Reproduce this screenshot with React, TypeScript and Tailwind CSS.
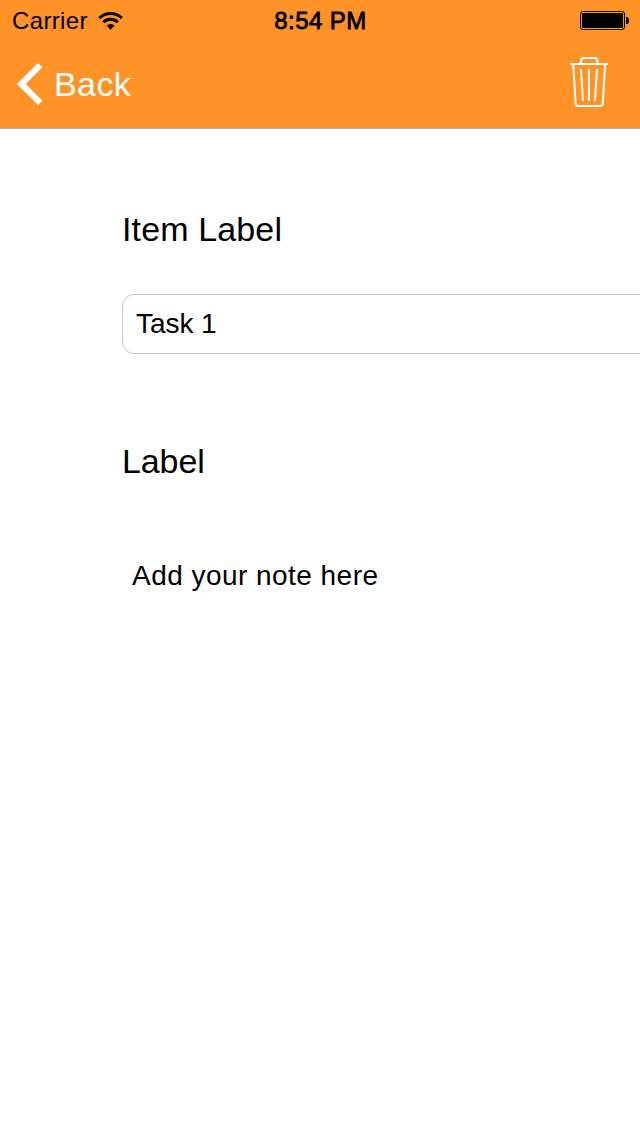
function WifiIcon() {
  return (
    <svg className="ml-[10px] h-[20px] w-[26px]" viewBox="98 10 26 20" fill="none">
      <path d="M99.4 17.2a15.8 15.8 0 0 1 22.4 0" stroke="#000" strokeWidth="3.1" />
      <path d="M103.3 21.2a10.3 10.3 0 0 1 14.6 0" stroke="#000" strokeWidth="3" />
      <path d="M106.6 24.6a5.6 5.6 0 0 1 8 0l-4 4.2z" fill="#000" />
    </svg>
  );
}

function BatteryIcon() {
  return (
    <svg className="h-[20px] w-[50px]" viewBox="580 11 50 20" fill="none">
      <rect x="580.5" y="11.5" width="44" height="18" rx="2.5" stroke="#000" />
      <rect x="582" y="13" width="41" height="15" rx="1.2" fill="#000" />
      <path d="M626 17h1.5q1.5 1 1.5 3.5t-1.5 3.5H626z" fill="#000" />
    </svg>
  );
}

function StatusBar() {
  return (
    <div className="grid h-10 grid-cols-3 items-start pl-3 pr-[10px] pt-px text-2xl leading-[40px] text-black">
      <div className="flex items-center">
        <span className="tracking-[0.35px]">Carrier</span>
        <WifiIcon />
      </div>
      <div className="-ml-px text-center tracking-[0.45px] [-webkit-text-stroke:0.8px_#000]">8:54 PM</div>
      <div className="flex h-10 items-center justify-end">
        <BatteryIcon />
      </div>
    </div>
  );
}

function NavBar() {
  return (
    <nav className="flex h-[88px] justify-between pl-4 pr-8 text-white">
      <button className="flex h-[88px] items-center">
        <svg className="h-[44px] w-[28px]" viewBox="16 62 28 44">
          <path d="M38 63l4.3 4.2L25.8 84l16.5 16.7L38 105 16.8 84z" fill="#fff" />
        </svg>
        <span className="ml-[10px] text-[34px] leading-[40px] tracking-[0.4px]">Back</span>
      </button>
      <button className="flex items-start pt-4">
        <svg className="h-[52px] w-[38px]" viewBox="570 56 38 52" fill="none" stroke="#fff" strokeWidth="2">
          <path d="M570 64h38M581 63.5v-2.2q0-3.3 3.3-3.3h9.9q3.3 0 3.3 3.3v2.2" />
          <path d="M573.2 64l2.4 39q.2 3.1 3 3.1h21.2q2.8 0 3-3.1l2.3-39" />
          <path d="M581 69l2 32M589 69v32M597 69l-2 32" />
        </svg>
      </button>
    </nav>
  );
}

export default function App() {
  return (
    <div className="h-[1136px] w-[640px] overflow-hidden bg-white font-['Liberation_Sans',Arial,sans-serif] text-black">
      <header className="h-[129px] border-b border-[#b2b2b2] bg-[#ff9328]">
        <StatusBar />
        <NavBar />
      </header>
      <main className="pl-[122px] pt-[80px]">
        <h1 className="h-[40px] text-[34px] leading-[40px] tracking-[0.13px]">Item Label</h1>
        <div className="mt-[45px] flex h-[60px] w-[600px] items-center rounded-[12px] border border-[#cccccc] pl-[13px] text-[28px] tracking-[-0.05px]">
          Task 1
        </div>
        <h2 className="mt-[87px] h-[40px] text-[34px] leading-[40px] tracking-[-0.1px]">Label</h2>
        <p className="ml-[10px] mt-[79px] text-[28px] leading-[32px] tracking-[0.46px]">Add your note here</p>
      </main>
    </div>
  );
}
